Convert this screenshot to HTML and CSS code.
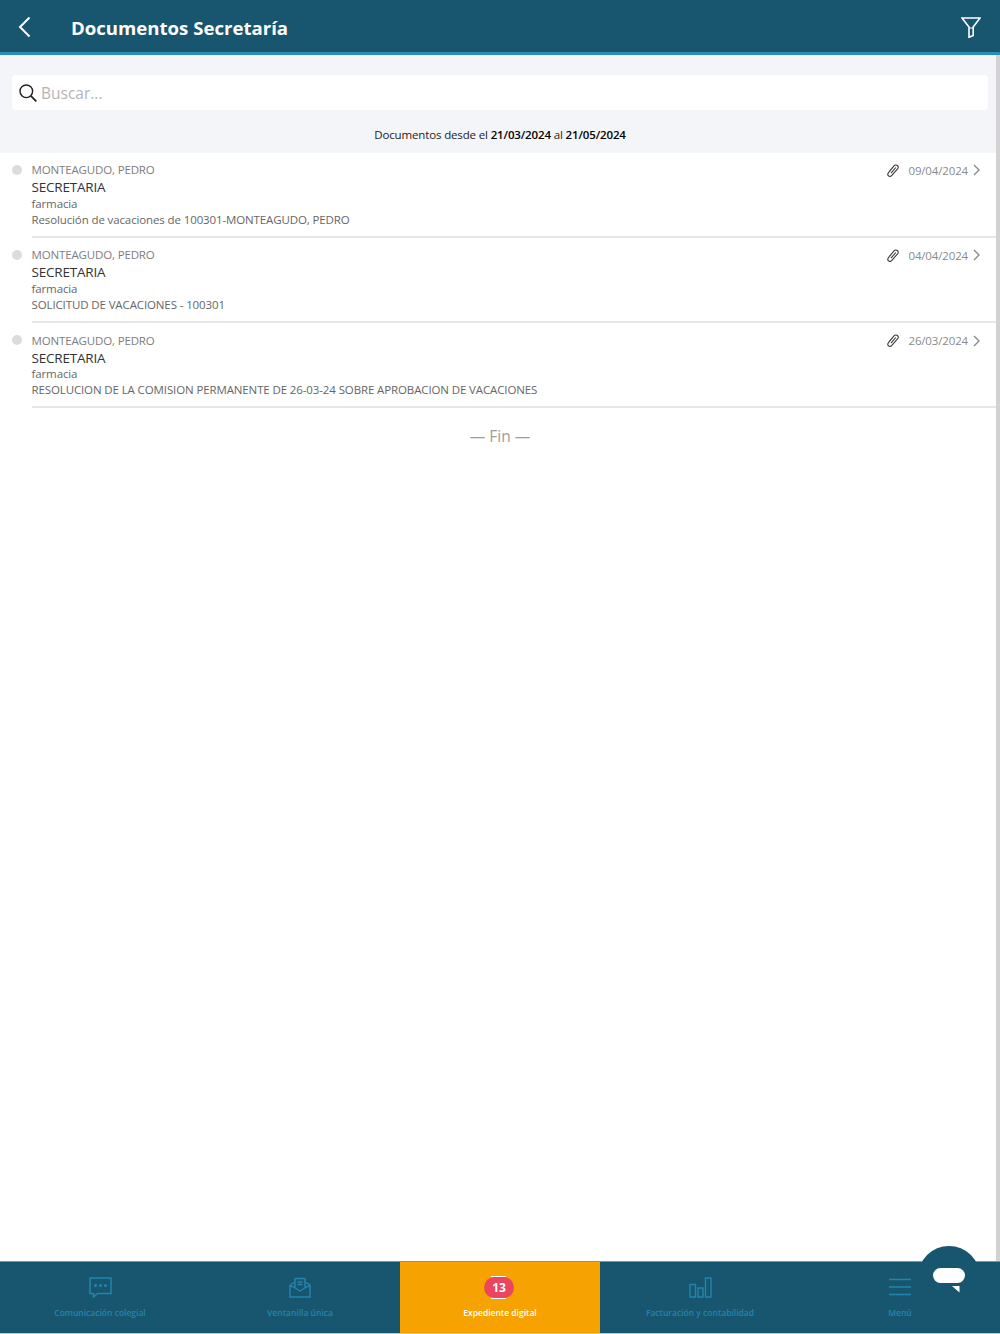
FILE: index.html
```html
<!DOCTYPE html>
<html lang="es">
<head>
  <meta charset="UTF-8" />
  <meta name="viewport" content="width=device-width, initial-scale=1.0"/>
  <title>Documentos Secretaría</title>
  <link rel="stylesheet" href="styles.css">
</head>
<body>
  <div class="app">
    <!-- Cabecera -->
    <header class="cabecera">
      <svg class="ico-atras" width="14" height="22" viewBox="0 0 14 22"><path d="M11.500 1.500 2 11l9.500 9.500" fill="none" stroke="#fff" stroke-width="2"/></svg>
      <h1>Documentos Secretaría</h1>
      <svg class="ico-filtro" width="20" height="21" viewBox="0 0 20 21"><path d="M1 1h18l-6.800 9v8.500L8 20.300V10z" fill="none" stroke="#fff" stroke-width="1.600"/><path d="M8 11h4.200" stroke="#fff" stroke-width="1"/></svg>
    </header>

    <div class="contenido">
      <main class="principal">
        <div class="filtros">
          <div class="buscador">
            <svg width="18" height="18" viewBox="0 0 18 18"><circle cx="7.300" cy="7.300" r="6.300" fill="none" stroke="#222" stroke-width="1.400"/><path d="m11.800 11.800 5.500 5.500" stroke="#222" stroke-width="1.800"/></svg>
            <span>Buscar...</span>
          </div>
          <p class="rango">Documentos desde el <b>21/03/2024</b> al <b>21/05/2024</b></p>
        </div>

        <ul class="lista">
          <li class="doc">
            <span class="punto"></span>
            <div class="doc-cuerpo">
              <div class="doc-texto">
                <div class="autor">MONTEAGUDO, PEDRO</div>
                <div class="tipo">SECRETARIA</div>
                <div class="linea">farmacia</div>
                <div class="linea">Resolución de vacaciones de 100301-MONTEAGUDO, PEDRO</div>
              </div>
              <div class="doc-meta">
                <svg class="clip" width="12" height="13" viewBox="0 0 12 13"><path d="M2.400 7.400 7 1.900c.9-1.100 2.400-1.300 3.400-.4s1 2.300.1 3.400L5.100 11.200c-1.100 1.300-2.700 1.500-3.600.7s-.9-2.300.2-3.600l4.900-5.800M4 9.200l4.800-5.700" fill="none" stroke="#3c3c3c" stroke-width="1.100"/></svg>
                <span class="fecha">09/04/2024</span>
                <svg width="7" height="12" viewBox="0 0 7 12"><path d="m1 1 5 5-5 5" fill="none" stroke="#8a8a8a" stroke-width="1.400"/></svg>
              </div>
            </div>
          </li>
          <li class="doc">
            <span class="punto"></span>
            <div class="doc-cuerpo">
              <div class="doc-texto">
                <div class="autor">MONTEAGUDO, PEDRO</div>
                <div class="tipo">SECRETARIA</div>
                <div class="linea">farmacia</div>
                <div class="linea">SOLICITUD DE VACACIONES - 100301</div>
              </div>
              <div class="doc-meta">
                <svg class="clip" width="12" height="13" viewBox="0 0 12 13"><path d="M2.400 7.400 7 1.900c.9-1.100 2.400-1.300 3.400-.4s1 2.300.1 3.400L5.100 11.200c-1.100 1.300-2.700 1.500-3.600.7s-.9-2.300.2-3.600l4.900-5.800M4 9.200l4.800-5.700" fill="none" stroke="#3c3c3c" stroke-width="1.100"/></svg>
                <span class="fecha">04/04/2024</span>
                <svg width="7" height="12" viewBox="0 0 7 12"><path d="m1 1 5 5-5 5" fill="none" stroke="#8a8a8a" stroke-width="1.400"/></svg>
              </div>
            </div>
          </li>
          <li class="doc">
            <span class="punto"></span>
            <div class="doc-cuerpo">
              <div class="doc-texto">
                <div class="autor">MONTEAGUDO, PEDRO</div>
                <div class="tipo">SECRETARIA</div>
                <div class="linea">farmacia</div>
                <div class="linea">RESOLUCION DE LA COMISION PERMANENTE DE 26-03-24 SOBRE APROBACION DE VACACIONES</div>
              </div>
              <div class="doc-meta">
                <svg class="clip" width="12" height="13" viewBox="0 0 12 13"><path d="M2.400 7.400 7 1.900c.9-1.100 2.400-1.300 3.400-.4s1 2.300.1 3.400L5.100 11.200c-1.100 1.300-2.700 1.500-3.600.7s-.9-2.300.2-3.600l4.900-5.800M4 9.200l4.800-5.700" fill="none" stroke="#3c3c3c" stroke-width="1.100"/></svg>
                <span class="fecha">26/03/2024</span>
                <svg width="7" height="12" viewBox="0 0 7 12"><path d="m1 1 5 5-5 5" fill="none" stroke="#8a8a8a" stroke-width="1.400"/></svg>
              </div>
            </div>
          </li>
        </ul>
        <p class="fin">— Fin —</p>
      </main>
      <div class="barra-scroll"></div>
    </div>

    <!-- Menú inferior -->
    <nav class="menu">
      <a class="opcion">
        <svg width="23" height="21" viewBox="0 0 23 21"><path d="M1 1h21v15.500H8.500l-4 3.500v-3.500H1z" fill="none" stroke="#2285ad" stroke-width="1.500"/><circle cx="6.500" cy="8.500" r="1.500" fill="#2285ad"/><circle cx="11.500" cy="8.500" r="1.500" fill="#2285ad"/><circle cx="16.500" cy="8.500" r="1.500" fill="#2285ad"/></svg>
        <span>Comunicación colegial</span>
      </a>
      <a class="opcion">
        <svg width="22" height="21" viewBox="0 0 22 21"><path d="M1 8v12h20V8l-5-3M1 8l5-3M1 8l10 6 10-6M6 10.500V1.500h10v9M8.500 5h5M8.500 7.500h5" fill="none" stroke="#2285ad" stroke-width="1.400"/></svg>
        <span>Ventanilla única</span>
      </a>
      <a class="opcion activa">
        <span class="insignia">13</span>
        <span>Expediente digital</span>
      </a>
      <a class="opcion">
        <svg width="23" height="21" viewBox="0 0 23 21"><path d="M1 7.500h5.500V20H1zM9 11h5v9H9zM16.500 1H22v19h-5.500z" fill="none" stroke="#2285ad" stroke-width="1.400"/></svg>
        <span>Facturación y contabilidad</span>
      </a>
      <a class="opcion">
        <svg width="22" height="21" viewBox="0 0 22 21"><path d="M0 2.500h22M0 10h22M0 17.500h22" stroke="#2285ad" stroke-width="1.500"/></svg>
        <span>Menú</span>
      </a>
    </nav>

    <!-- Botón de chat -->
    <div class="chat">
      <span class="chat-globo"></span>
      <svg class="chat-cola" width="8" height="7" viewBox="0 0 8 7"><path d="M0 0h7.500v6.500z" fill="#fff"/></svg>
    </div>
  </div>
</body>
</html>
```

FILE: styles.css
```css
* { box-sizing: border-box; }
html, body {
  margin: 0;
  padding: 0;
  height: 100%;
}
body {
  font-family: "Open Sans", "Noto Sans", sans-serif;
  background: #ffffff;
  color: #333333;
}
.app {
  position: relative;
  height: 1334px;
  display: flex;
  flex-direction: column;
  overflow: hidden;
}
.cabecera {
  height: 55px;
  flex: none;
  display: flex;
  align-items: center;
  background: #18566f;
  border-bottom: 3px solid #2a8fb5;
  padding: 2px 19px 0 18px;
}
.cabecera h1 {
  margin: 0 0 0 39px;
  font-size: 18.600px;
  font-weight: 700;
  color: #ffffff;
  flex: 1;
}
.contenido {
  flex: 1;
  display: flex;
  min-height: 0;
}
.principal {
  flex: 1;
  min-width: 0;
}
.barra-scroll {
  width: 4px;
  background: #d2d2d2;
}
.filtros {
  height: 97.500px;
  background: #f4f5f9;
  padding: 20px 8px 0 12px;
}
.buscador {
  height: 35px;
  display: flex;
  align-items: center;
  gap: 4px;
  padding-left: 7px;
  background: #ffffff;
  border-radius: 4px;
}
.buscador span {
  font-size: 15.500px;
  color: #b4b4b4;
}
.rango {
  margin: 17px 0 0;
  text-align: center;
  font-size: 11.500px;
  letter-spacing: -0.140px;
  color: #222222;
}
.rango b {
  font-weight: 600;
  color: #000000;
}
.lista {
  list-style: none;
  margin: 0;
  padding: 0;
}
.doc {
  display: flex;
  height: 85.300px;
}
.punto {
  width: 10px;
  height: 10px;
  margin: 12px 9.500px 0 12px;
  border-radius: 50%;
  background: #dcdcdc;
  flex: none;
}
.doc-cuerpo {
  flex: 1;
  display: flex;
  justify-content: space-between;
  padding: 7.500px 16px 0 0;
  border-bottom: 2px solid #e6e6e6;
}
.autor {
  font-size: 11.500px;
  letter-spacing: -0.150px;
  line-height: 20px;
  color: #7d7d7d;
}
.tipo {
  font-size: 13.500px;
  letter-spacing: -0.200px;
  line-height: 15.700px;
  color: #333333;
}
.linea {
  font-size: 11.500px;
  letter-spacing: -0.120px;
  line-height: 16px;
  color: #666666;
}
.doc-meta {
  display: flex;
  align-items: center;
  height: 20px;
}
.clip { margin-right: 9px; }
.fecha {
  font-size: 11.500px;
  letter-spacing: -0.150px;
  color: #8a8a8a;
  margin-right: 5px;
}
.fin {
  margin: 17px 0 0;
  padding-left: 4px;
  text-align: center;
  font-size: 15.500px;
  color: #9c9c9c;
}
.menu {
  height: 73px;
  flex: none;
  display: grid;
  grid-template-columns: repeat(5, 1fr);
  background: #18566f;
  border-top: 1px solid #6f9aab;
  border-bottom: 1px solid #c4c8ca;
}
.opcion {
  display: flex;
  flex-direction: column;
  align-items: center;
  padding-top: 15px;
  font-size: 8.500px;
  font-weight: 600;
  color: #2285ad;
}
.opcion svg, .insignia {
  margin-bottom: 9px;
}
.opcion svg { height: 21px; }
.activa {
  background: #f6a200;
  color: #ffffff;
}
/* franjas blancas del icono que queda detras del numero */
.insignia {
  position: relative;
  width: 30px;
  height: 21px;
  line-height: 21px;
  border-radius: 11px;
  text-align: center;
  background: #ec4560;
  color: #ffffff;
  font-size: 12px;
  font-weight: 700;
  transform: translateX(-1px);
}
.insignia::before {
  content: "";
  position: absolute;
  left: 7px;
  right: 8px;
  top: -1px;
  bottom: -1px;
  border-top: 1px solid #ffffff;
  border-bottom: 1px solid #ffffff;
}
.chat {
  position: absolute;
  left: 918px;
  top: 1246px;
  width: 62px;
  height: 62px;
  border-radius: 50%;
  background: #18566f;
}
.chat-globo {
  position: absolute;
  left: 15px;
  top: 22px;
  width: 32px;
  height: 15px;
  border-radius: 8px;
  background: #ffffff;
}
.chat-cola {
  position: absolute;
  left: 34px;
  top: 40px;
}
```
